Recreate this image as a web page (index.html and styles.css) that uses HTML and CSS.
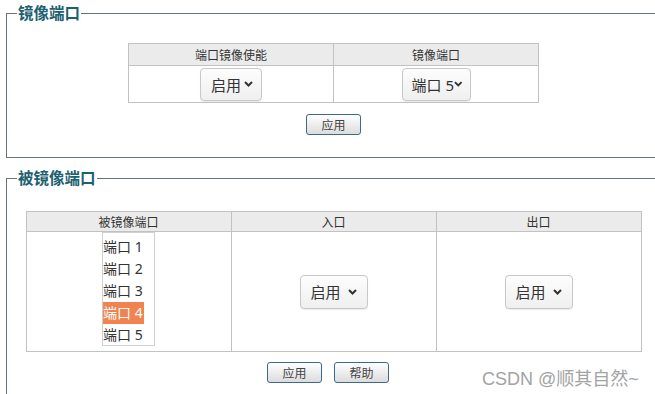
FILE: index.html
```html
<!DOCTYPE html>
<html lang="zh-CN">
<head>
    <meta charset="UTF-8">
    <meta name="viewport" content="width=device-width, initial-scale=1.0">
    <title>端口镜像</title>
    <link rel="stylesheet" href="styles.css">
</head>
<body>
    <fieldset class="panel panel-mirror">
        <legend>镜像端口</legend>
        <table class="grid grid-mirror">
            <tr>
                <th>端口镜像使能</th>
                <th>镜像端口</th>
            </tr>
            <tr>
                <td>
                    <span class="dropdown dd-enable">启用
                        <svg class="chevron" width="9" height="6" viewBox="0 0 9 6"><path d="M1 1 L4.5 4.5 L8 1" /></svg>
                    </span>
                </td>
                <td>
                    <span class="dropdown dd-port">端口 5
                        <svg class="chevron" width="9" height="6" viewBox="0 0 9 6"><path d="M1 1 L4.5 4.5 L8 1" /></svg>
                    </span>
                </td>
            </tr>
        </table>
        <div class="actions">
            <button class="btn">应用</button>
        </div>
    </fieldset>

    <fieldset class="panel panel-source">
        <legend>被镜像端口</legend>
        <table class="grid grid-source">
            <tr>
                <th>被镜像端口</th>
                <th>入口</th>
                <th>出口</th>
            </tr>
            <tr>
                <td class="cell-list">
                    <div class="listbox">
                        <div class="list-item"><span>端口 1</span></div>
                        <div class="list-item"><span>端口 2</span></div>
                        <div class="list-item"><span>端口 3</span></div>
                        <div class="list-item selected"><span>端口 4</span></div>
                        <div class="list-item"><span>端口 5</span></div>
                    </div>
                </td>
                <td>
                    <span class="dropdown dd-wide">启用
                        <svg class="chevron" width="9" height="6" viewBox="0 0 9 6"><path d="M1 1 L4.5 4.5 L8 1" /></svg>
                    </span>
                </td>
                <td>
                    <span class="dropdown dd-wide">启用
                        <svg class="chevron" width="9" height="6" viewBox="0 0 9 6"><path d="M1 1 L4.5 4.5 L8 1" /></svg>
                    </span>
                </td>
            </tr>
        </table>
        <div class="actions actions-pair">
            <button class="btn">应用</button>
            <button class="btn">帮助</button>
        </div>
    </fieldset>

    <div class="watermark">CSDN @顺其自然~</div>
</body>
</html>
```

FILE: styles.css
```css
body {
    margin: 0;
    font-family: "Noto Sans", "Noto Sans CJK SC", sans-serif;
    color: #333;
    background: #fff;
    overflow: hidden;
}
.panel {
    box-sizing: border-box;
    width: 655px;
    margin: 3px 0 0 6px;
    padding: 0;
    border: 1px solid #69747a;
    min-inline-size: 0;
}
.panel legend {
    margin-left: 10px;
    padding: 0 1px;
    font-size: 15.5px;
    line-height: 20px;
    font-weight: bold;
    color: #1d6070;
}
.panel-mirror {
    padding: 20px 0 22px;
}
.panel-source {
    margin-top: 10px;
    padding: 23px 0 30px;
}
.grid {
    border-collapse: collapse;
    margin: 0 auto;
    border: 1px solid #c2c2c2;
    table-layout: fixed;
}
.grid th {
    background: #ebebeb;
    font-weight: normal;
    font-size: 12px;
    height: 21px;
    padding: 0;
    border: 1px solid #c2c2c2;
}
.grid td {
    border: 1px solid #c2c2c2;
    text-align: center;
    vertical-align: middle;
    padding: 0;
}
.grid-mirror th,
.grid-mirror td {
    width: 204px;
}
.grid-mirror td {
    height: 36px;
}
.grid-source th {
    height: 19px;
}
.grid-source th,
.grid-source td {
    width: 204px;
}
.grid-source td {
    height: 119px;
}
.grid-source td.cell-list {
    vertical-align: top;
}
.dropdown {
    box-sizing: border-box;
    display: inline-flex;
    align-items: center;
    justify-content: space-between;
    height: 33px;
    padding: 0 9px 0 10px;
    border: 1px solid #c8c8c8;
    border-radius: 4px;
    background: linear-gradient(#fdfdfd, #efefef);
    box-shadow: 0 1px 1px rgba(0, 0, 0, 0.08);
    font-size: 15px;
    color: #333;
    white-space: nowrap;
    vertical-align: middle;
}
.dd-enable {
    width: 62px;
    padding-right: 8px;
}
.dd-port {
    width: 69px;
    padding: 0 7px 0 9px;
}
.dd-wide {
    width: 68px;
    height: 34px;
    padding-right: 10px;
}
.chevron path {
    fill: none;
    stroke: #333;
    stroke-width: 2;
}
.listbox {
    box-sizing: border-box;
    display: inline-block;
    width: 53px;
    height: 114px;
    padding-top: 3px;
    border: 1px solid #d0d0d0;
    text-align: left;
    vertical-align: top;
}
.list-item {
    height: 22px;
    line-height: 22px;
    font-size: 14px;
}
.list-item span {
    display: inline-block;
    padding: 0 1px 0 0;
}
.list-item.selected span {
    background: #f0834f;
    color: #fff;
}
.actions {
    display: flex;
    justify-content: center;
    gap: 12px;
    margin-top: 11px;
}
.actions-pair {
    margin-top: 10px;
    padding-right: 11px;
}
.btn {
    width: 55px;
    height: 21px;
    padding: 0;
    border: 1px solid #3e6890;
    border-radius: 3px;
    background: linear-gradient(#ffffff, #dcdcdc);
    font-family: "Noto Sans CJK SC", sans-serif;
    font-size: 12px;
    color: #444;
    line-height: 19px;
}
.watermark {
    position: absolute;
    left: 482px;
    top: 364px;
    font-family: "Liberation Sans", "Noto Sans CJK SC", sans-serif;
    font-size: 18px;
    color: #a3a3a3;
    white-space: nowrap;
}
```
